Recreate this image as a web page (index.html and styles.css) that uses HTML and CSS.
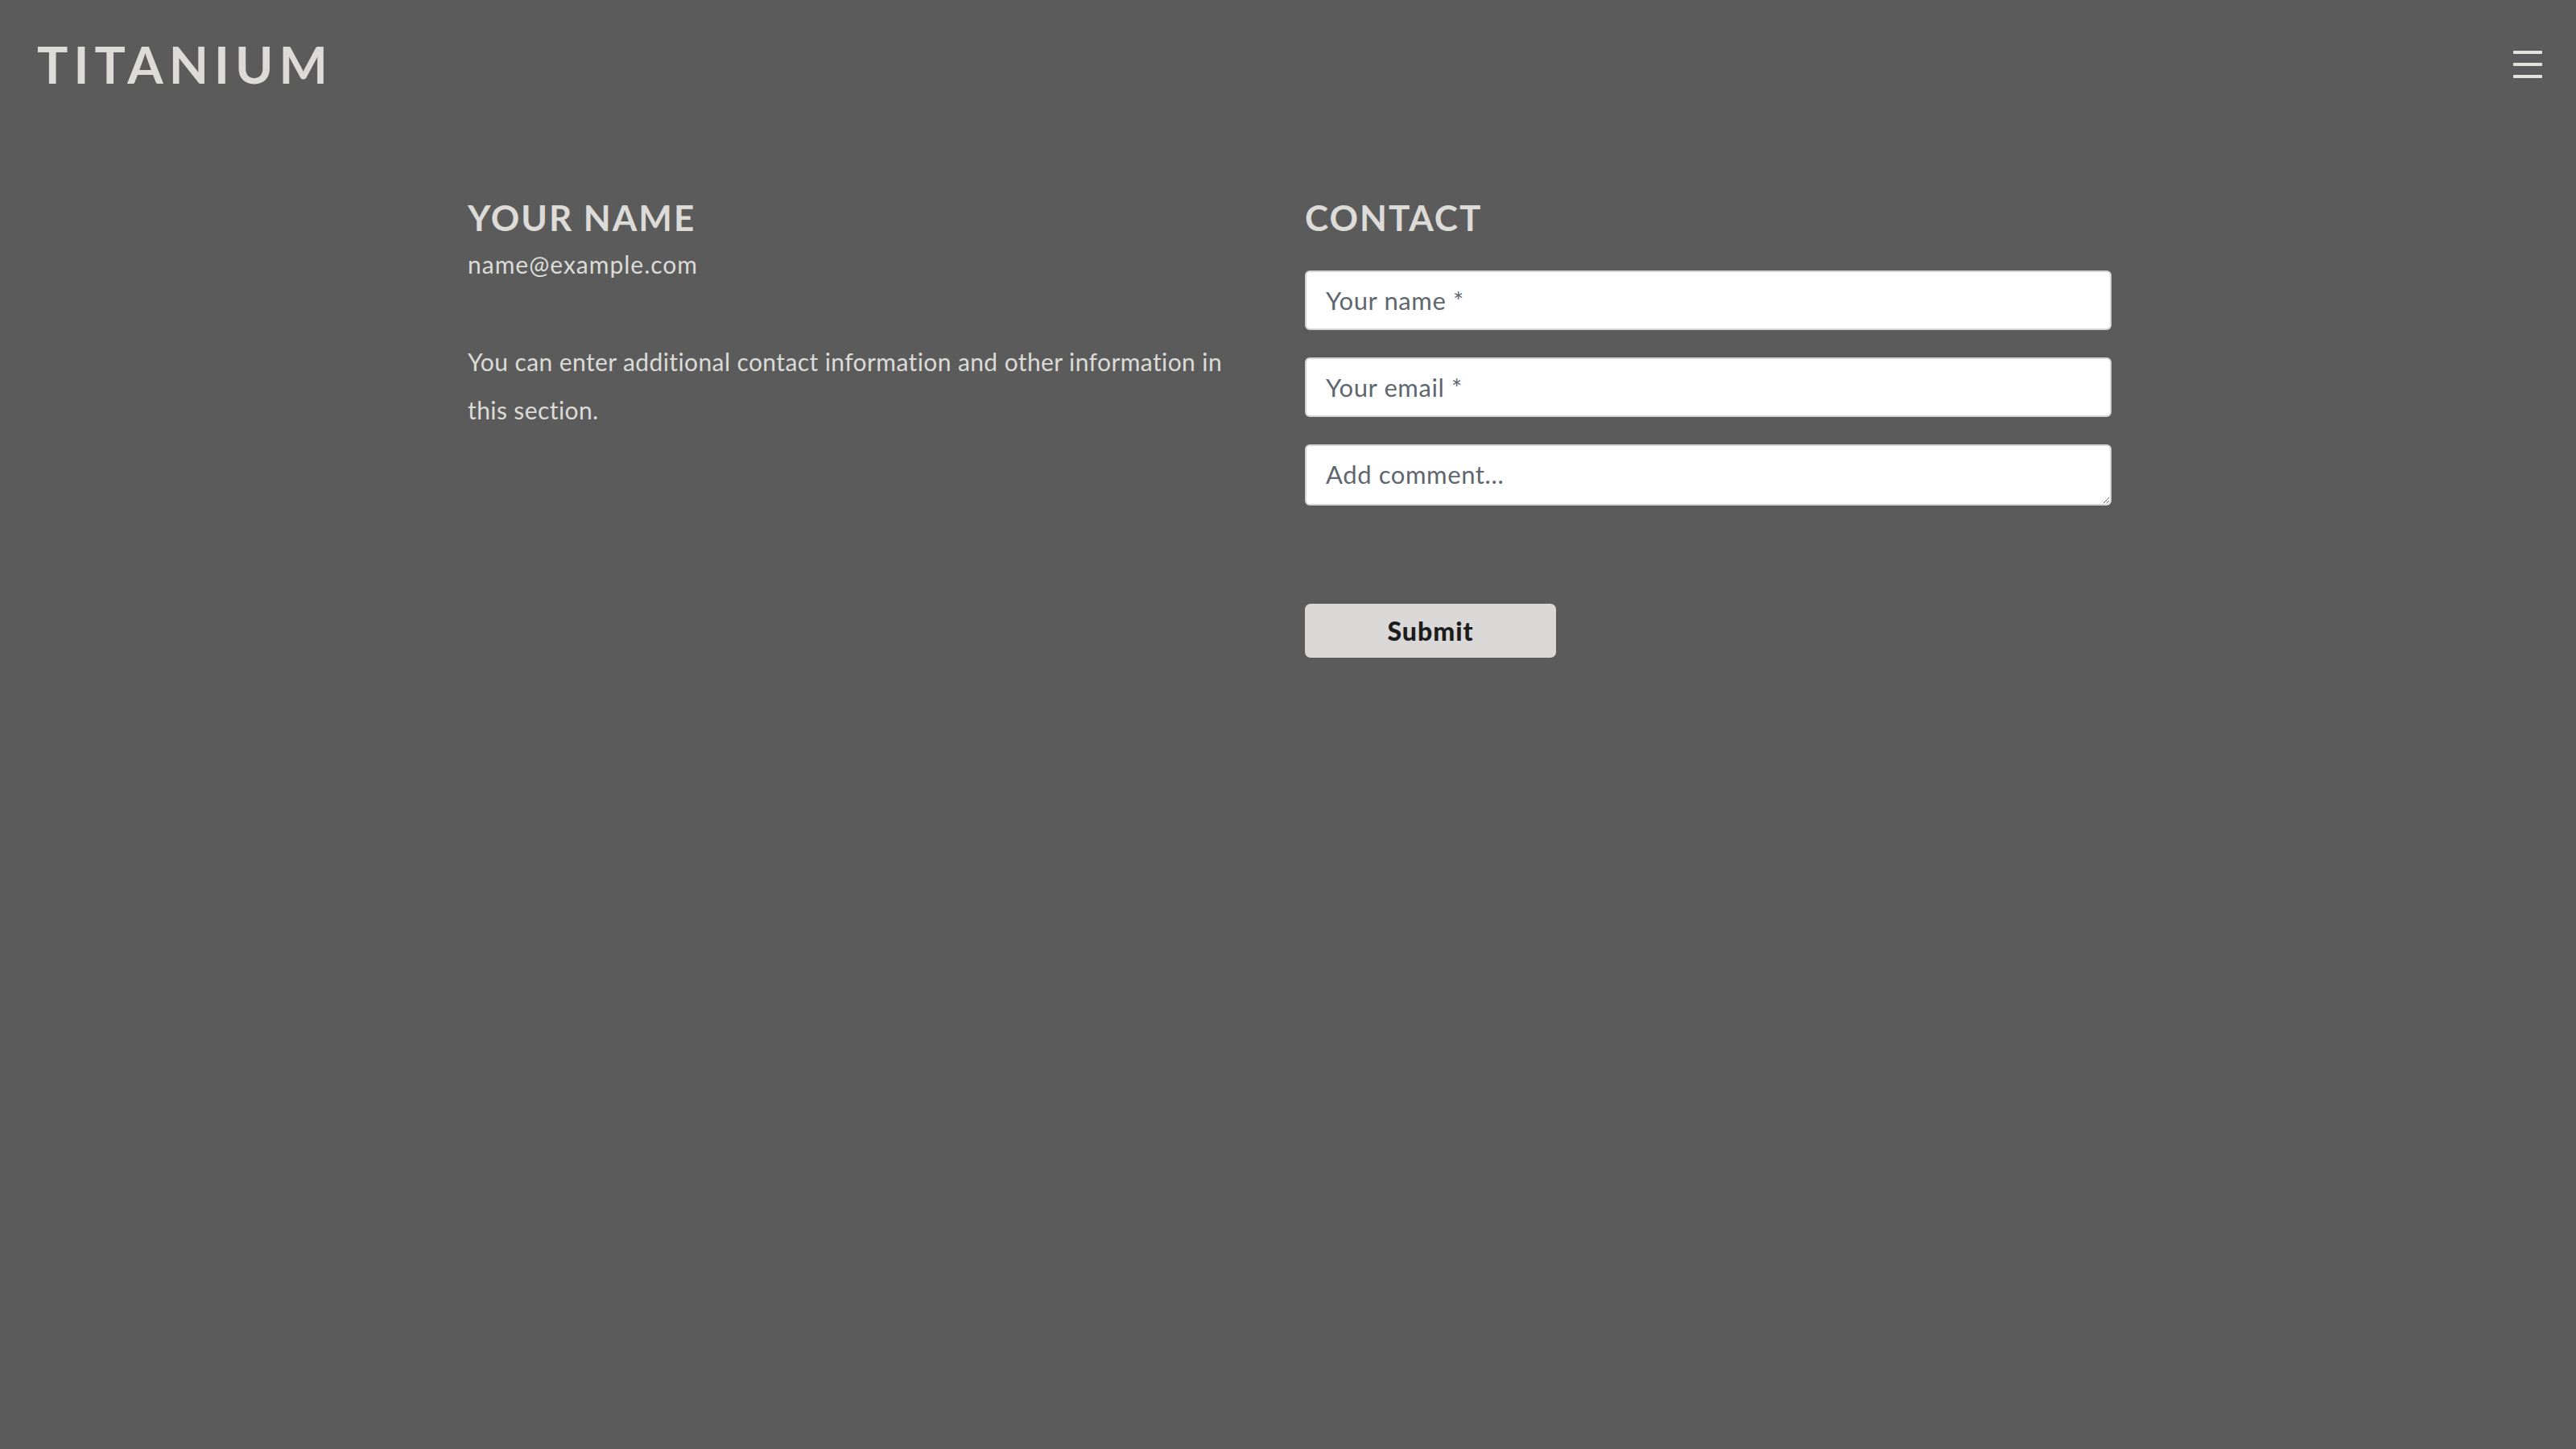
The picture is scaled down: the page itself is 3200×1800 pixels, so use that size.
FILE: index.html
```html
<!DOCTYPE html>
<html lang="en">
<head>
<meta charset="utf-8">
<title>Titanium</title>
<link rel="stylesheet" href="styles.css">
</head>
<body>
<header class="topbar">
  <div class="logo">TITANIUM</div>
  <button class="menu" aria-label="Menu">
    <span></span><span></span><span></span>
  </button>
</header>
<main class="content">
  <section class="info">
    <h2 class="title">YOUR NAME</h2>
    <p class="email">name@example.com</p>
    <p class="text">You can enter additional contact information and other information in this section.</p>
  </section>
  <section class="contact">
    <h2 class="title">CONTACT</h2>
    <form class="form">
      <input class="field" type="text" placeholder="Your name *">
      <input class="field" type="email" placeholder="Your email *">
      <textarea class="field area" placeholder="Add comment..."></textarea>
      <button class="submit" type="button">Submit</button>
    </form>
  </section>
</main>
</body>
</html>
```
FILE: styles.css
```css
html, body {
  margin: 0;
  padding: 0;
  background: #5b5b5b;
  font-family: Lato, "Open Sans", "Liberation Sans", sans-serif;
  color: #dcdbd8;
}
.topbar {
  display: flex;
  justify-content: space-between;
  align-items: center;
  padding: 40px 42px 0 46px;
  height: 80px;
}
.logo {
  font-size: 64px;
  font-weight: 700;
  letter-spacing: 7px;
  color: #dcdbd8;
  line-height: 1;
}
.menu {
  width: 36px;
  height: 34px;
  padding: 0;
  border: 0;
  background: none;
  display: flex;
  flex-direction: column;
  justify-content: space-between;
}
.menu span {
  display: block;
  width: 36px;
  height: 4px;
  background: #e4e3e0;
  border-radius: 1px;
}
.content {
  width: 2038px;
  margin: 124px auto 0;
  display: grid;
  grid-template-columns: 998px 998px;
  column-gap: 42px;
}
.title {
  margin: 0;
  font-size: 44px;
  font-weight: 700;
  letter-spacing: 2px;
  line-height: 1.2;
  color: #dcdbd8;
}
.email {
  margin: 10px 0 0;
  font-size: 30px;
  letter-spacing: 1px;
  line-height: 1.4;
}
.text {
  margin: 70px 0 0;
  max-width: 970px;
  font-size: 30px;
  letter-spacing: 0.4px;
  line-height: 60px;
}
.form {
  display: flex;
  flex-direction: column;
  align-items: flex-start;
  margin-top: 39px;
}
.field {
  box-sizing: border-box;
  width: 1002px;
  height: 74px;
  margin: 0 0 34px;
  padding: 0 24px;
  border: 2px solid #d3d5d9;
  border-radius: 6px;
  background: #ffffff;
  font-family: inherit;
  font-size: 31px;
  letter-spacing: 0.6px;
  color: #333;
  outline: none;
}
.field::placeholder {
  color: #5f6670;
}
.area {
  height: 76px;
  padding-top: 16px;
  resize: vertical;
  display: block;
}
.submit {
  margin-top: 88px;
  width: 312px;
  height: 67px;
  border: 0;
  border-radius: 7px;
  background: #d9d8d6;
  color: #1c1c1c;
  font-family: inherit;
  font-size: 32px;
  letter-spacing: 1px;
  font-weight: 900;
}
```
